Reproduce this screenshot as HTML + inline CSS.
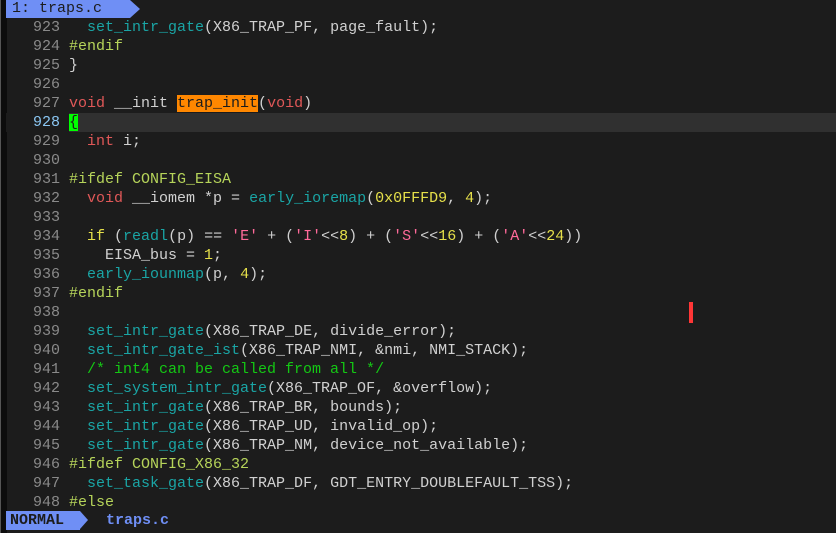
<!DOCTYPE html>
<html><head><meta charset="utf-8"><style>
*{margin:0;padding:0}
html,body{width:836px;height:533px;overflow:hidden;background:#1c1c1c}
body{position:relative;font-family:"Liberation Mono",monospace;font-size:15px}
#strip{position:absolute;left:0;top:0;width:6px;height:533px;background:#0c0c0c;border-left:1px solid #555}
#tabbar{position:absolute;left:6px;top:0;width:830px;height:18px;background:#1c1c1c}
#tab{position:absolute;left:0;top:0;height:18px;width:124px;background:#6f8ff5;color:#1c1c1c;line-height:18px;padding-left:6px;box-sizing:border-box}
#tabarrow{position:absolute;left:124px;top:0;width:0;height:0;border-top:9px solid transparent;border-bottom:9px solid transparent;border-left:10px solid #6f8ff5}
.l{position:absolute;left:6px;width:830px;height:19px;line-height:19px;white-space:pre;color:#d0d0d0}
.n{color:#8a8a8a;display:inline-block;width:63px;text-align:right;padding-right:0}
.cur{background:linear-gradient(to right,#1c1c1c 63px,#303030 63px)}
.cur .n{color:#8ac6f2}
.c{color:#1aa5a5}.k{color:#e05858}.p{color:#b6d45a}.y{color:#e6e04a}.s{color:#ff6a9a}.g{color:#14c814}
.hl{background:#ff8700;color:#1c1c1c}
.br{background:#00ff00;color:#1c1c1c}
#status{position:absolute;left:6px;top:511px;width:830px;height:19px;background:#1c1c1c;line-height:19px}
#mode{position:absolute;left:0;top:0;height:19px;width:74px;background:#6f8ff5;color:#1c1c1c;font-weight:bold;padding-left:4px;box-sizing:border-box}
#modearrow{position:absolute;left:74px;top:0;border-top:9.5px solid transparent;border-bottom:9.5px solid transparent;border-left:8px solid #6f8ff5}
#fname{position:absolute;left:100px;top:0;color:#6f8ff5;font-weight:bold}
#red{position:absolute;left:689px;top:302px;width:4px;height:21px;background:#ff3636}
</style></head><body>
<div id="strip"></div>
<div id="tabbar"><div id="tab">1: traps.c</div><div id="tabarrow"></div></div>
<div class="l" style="top:18px"><span class="n">923 </span>  <span class="c">set_intr_gate</span>(X86_TRAP_PF, page_fault);</div>
<div class="l" style="top:37px"><span class="n">924 </span><span class="p">#endif</span></div>
<div class="l" style="top:56px"><span class="n">925 </span>}</div>
<div class="l" style="top:75px"><span class="n">926 </span></div>
<div class="l" style="top:94px"><span class="n">927 </span><span class="k">void</span> __init <span class="hl">trap_init</span>(<span class="k">void</span>)</div>
<div class="l cur" style="top:113px"><span class="n">928 </span><span class="br">{</span></div>
<div class="l" style="top:132px"><span class="n">929 </span>  <span class="k">int</span> i;</div>
<div class="l" style="top:151px"><span class="n">930 </span></div>
<div class="l" style="top:170px"><span class="n">931 </span><span class="p">#ifdef CONFIG_EISA</span></div>
<div class="l" style="top:189px"><span class="n">932 </span>  <span class="k">void</span> __iomem *p = <span class="c">early_ioremap</span>(<span class="y">0x0FFFD9</span>, <span class="y">4</span>);</div>
<div class="l" style="top:208px"><span class="n">933 </span></div>
<div class="l" style="top:227px"><span class="n">934 </span>  <span class="y">if</span> (<span class="c">readl</span>(p) == <span class="s">'E'</span> + (<span class="s">'I'</span>&lt;&lt;<span class="y">8</span>) + (<span class="s">'S'</span>&lt;&lt;<span class="y">16</span>) + (<span class="s">'A'</span>&lt;&lt;<span class="y">24</span>))</div>
<div class="l" style="top:246px"><span class="n">935 </span>    EISA_bus = <span class="y">1</span>;</div>
<div class="l" style="top:265px"><span class="n">936 </span>  <span class="c">early_iounmap</span>(p, <span class="y">4</span>);</div>
<div class="l" style="top:284px"><span class="n">937 </span><span class="p">#endif</span></div>
<div class="l" style="top:303px"><span class="n">938 </span></div>
<div class="l" style="top:322px"><span class="n">939 </span>  <span class="c">set_intr_gate</span>(X86_TRAP_DE, divide_error);</div>
<div class="l" style="top:341px"><span class="n">940 </span>  <span class="c">set_intr_gate_ist</span>(X86_TRAP_NMI, &amp;nmi, NMI_STACK);</div>
<div class="l" style="top:360px"><span class="n">941 </span>  <span class="g">/* int4 can be called from all */</span></div>
<div class="l" style="top:379px"><span class="n">942 </span>  <span class="c">set_system_intr_gate</span>(X86_TRAP_OF, &amp;overflow);</div>
<div class="l" style="top:398px"><span class="n">943 </span>  <span class="c">set_intr_gate</span>(X86_TRAP_BR, bounds);</div>
<div class="l" style="top:417px"><span class="n">944 </span>  <span class="c">set_intr_gate</span>(X86_TRAP_UD, invalid_op);</div>
<div class="l" style="top:436px"><span class="n">945 </span>  <span class="c">set_intr_gate</span>(X86_TRAP_NM, device_not_available);</div>
<div class="l" style="top:455px"><span class="n">946 </span><span class="p">#ifdef CONFIG_X86_32</span></div>
<div class="l" style="top:474px"><span class="n">947 </span>  <span class="c">set_task_gate</span>(X86_TRAP_DF, GDT_ENTRY_DOUBLEFAULT_TSS);</div>
<div class="l" style="top:493px"><span class="n">948 </span><span class="p">#else</span></div>
<div id="red"></div>
<div id="status"><div id="mode">NORMAL</div><div id="modearrow"></div><div id="fname">traps.c</div></div>
</body></html>
